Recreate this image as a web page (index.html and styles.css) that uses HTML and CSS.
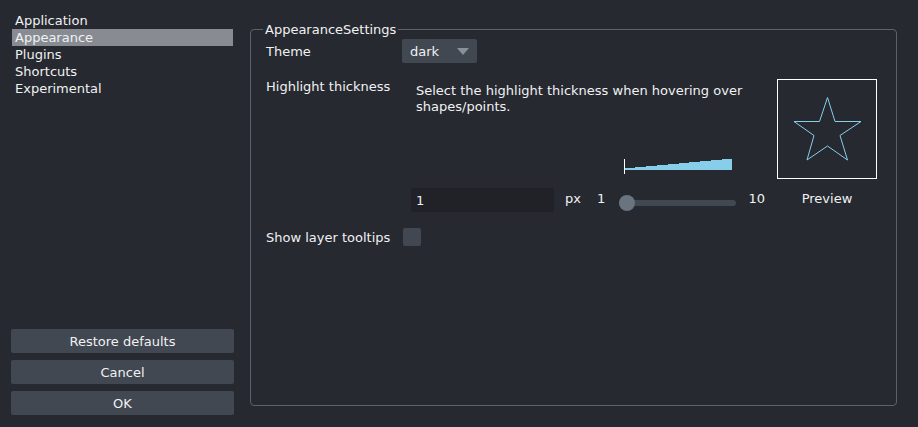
FILE: index.html
```html
<!DOCTYPE html>
<html lang="en">
<head>
<meta charset="utf-8">
<title>Preferences</title>
<link rel="stylesheet" href="styles.css">
</head>
<body>
<div class="dialog">
  <aside class="sidebar">
    <ul class="nav">
      <li class="nav-item">Application</li>
      <li class="nav-item selected">Appearance</li>
      <li class="nav-item">Plugins</li>
      <li class="nav-item">Shortcuts</li>
      <li class="nav-item">Experimental</li>
    </ul>
    <div class="buttons">
      <button class="btn">Restore defaults</button>
      <button class="btn">Cancel</button>
      <button class="btn">OK</button>
    </div>
  </aside>
  <fieldset class="group">
    <legend class="group-title">AppearanceSettings</legend>
    <div class="form">
      <div class="label">Theme</div>
      <div class="field">
        <div class="combo"><span>dark</span><span class="arrow"></span></div>
      </div>

      <div class="label label-top">Highlight thickness</div>
      <div class="highlight">
        <div class="hl-top">
          <p class="desc">Select the highlight thickness when hovering over shapes/points.</p>
          <svg class="ramp" width="109" height="15" viewBox="0 0 109 15">
            <polygon fill="#87ceeb" points="1,11 1,9 11,9 11,8 22,8 22,7 33,7 33,6 44,6 44,5 55,5 55,4 65,4 65,3 76,3 76,2 87,2 87,1 98,1 98,0 108,0 108,11"/>
            <line x1="0.5" y1="0" x2="0.5" y2="15" stroke="#ffffff" stroke-width="1"/>
          </svg>
        </div>
        <svg class="preview" width="100" height="100" viewBox="0 0 100 100">
          <rect x="0.5" y="0.5" width="99" height="99" fill="none" stroke="#ffffff" stroke-width="1"/>
          <polygon fill="none" stroke="#87ceeb" stroke-width="1" points="50.5,18.5 58,42.5 84,42.5 63,56.5 70.5,81 50.5,67 30,81 37,56.5 17,42.5 42.5,42.5"/>
        </svg>
        <div class="hl-controls">
          <div class="input">1</div>
          <span class="unit">px</span>
          <span class="min">1</span>
          <div class="slider"><div class="track"></div><div class="handle"></div></div>
          <span class="max">10</span>
        </div>
        <div class="preview-label">Preview</div>
      </div>

      <div class="label">Show layer tooltips</div>
      <div class="field">
        <span class="checkbox"></span>
      </div>
    </div>
  </fieldset>
</div>
</body>
</html>
```

FILE: styles.css
```css
* { box-sizing: border-box; }

html, body {
  margin: 0;
  padding: 0;
  background: #262930;
}

body {
  font-family: "DejaVu Sans", "Liberation Sans", sans-serif;
  font-size: 13px;
  color: #f0f1f2;
}

.dialog {
  display: flex;
  height: 427px;
  padding: 12px 21px 12px 11px;
  gap: 16px;
}

/* Sidebar */
.sidebar {
  width: 223px;
  flex: none;
  display: flex;
  flex-direction: column;
}

.nav {
  list-style: none;
  margin: 0 1px;
  padding: 0;
}

.nav-item {
  height: 17px;
  line-height: 17px;
  padding-left: 3px;
}

.nav-item.selected {
  background: #888c92;
}

.buttons {
  margin-top: auto;
  display: flex;
  flex-direction: column;
  gap: 7px;
}

.btn {
  height: 24px;
  border: none;
  border-radius: 2px;
  background: #414851;
  color: #f0f1f2;
  font-family: inherit;
  font-size: 13px;
  padding: 0;
}

/* Group box */
.group {
  flex: 1;
  min-width: 0;
  margin: 10px 0 9px 0;
  padding: 0;
  border: 1px solid #5c626a;
  border-radius: 4px;
}

.group-title {
  margin-left: 12px;
  padding: 0 2px;
  line-height: 15px;
}

.form {
  display: grid;
  grid-template-columns: 136px 1fr;
  row-gap: 16px;
  padding: 2px 15px 0 15px;
}

.label {
  align-self: center;
  line-height: 15px;
}

.label-top {
  align-self: start;
}

.field {
  display: flex;
  align-items: center;
}

.combo {
  width: 75px;
  height: 24px;
  background: #414851;
  border-radius: 2px;
  display: flex;
  align-items: center;
  justify-content: space-between;
  padding: 0 8px;
}

.arrow {
  width: 0;
  height: 0;
  border-left: 6px solid transparent;
  border-right: 6px solid transparent;
  border-top: 7px solid #8b9097;
}

.checkbox {
  width: 18px;
  height: 18px;
  margin-left: 1px;
  border-radius: 2px;
  background: #414851;
}

/* Highlight widget */
.highlight {
  margin-left: 9px;
  display: grid;
  grid-template-columns: 354px 100px;
  grid-template-rows: 100px 24px;
  column-gap: 12px;
  row-gap: 9px;
}

.hl-top {
  display: flex;
  flex-direction: column;
  justify-content: space-between;
}

.desc {
  margin: 4px 0 0 5px;
  line-height: 16px;
}

.ramp {
  display: block;
  margin: 0 0 5px 213px;
}

.preview {
  display: block;
}

.hl-controls {
  display: flex;
  align-items: center;
}

.input {
  width: 144px;
  height: 24px;
  background: #202228;
  border-radius: 2px;
  padding: 0 5px;
  line-height: 26px;
}

.unit, .min, .max {
  margin-bottom: 4px;
}

.unit { margin-left: 11px; }
.min { margin-left: 16px; }

.slider {
  position: relative;
  width: 118px;
  height: 16px;
  margin-left: 14px;
  margin-top: 6px;
}

.track {
  position: absolute;
  left: 0;
  right: 0;
  top: 5px;
  height: 6px;
  border-radius: 3px;
  background: #414851;
}

.handle {
  position: absolute;
  left: 0;
  top: 0;
  width: 16px;
  height: 16px;
  border-radius: 50%;
  background: #6a7380;
}

.max { margin-left: 12px; }

.preview-label {
  text-align: center;
  align-self: center;
  margin-bottom: 4px;
}
```
